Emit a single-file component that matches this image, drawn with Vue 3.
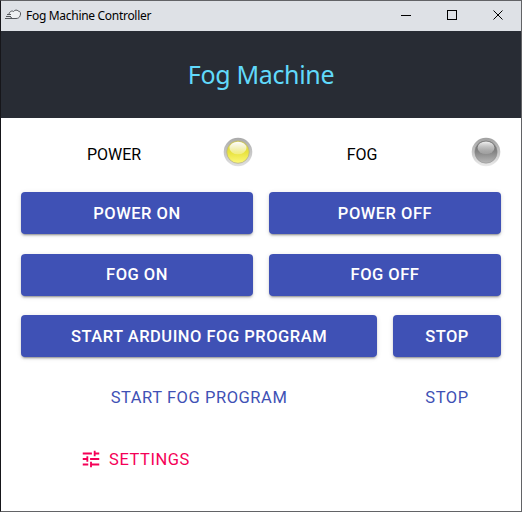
<script setup>
const rows = [
  { kind: 'halves', buttons: ['POWER ON', 'POWER OFF'] },
  { kind: 'halves', buttons: ['FOG ON', 'FOG OFF'] },
  { kind: 'wide', buttons: ['START ARDUINO FOG PROGRAM', 'STOP'] },
]
</script>

<template>
  <div class="window">
    <div class="titlebar">
      <svg class="logo" width="18" height="12" viewBox="0 0 18 12" fill="none" stroke="#55585c" stroke-width="1">
        <path fill="#eef0f2" d="M5 5C5.500 2.500 8 1.300 9.500 2.500C11 .7 13 .7 14.200 2C16.500 2.200 17 4.500 16.200 6.500C15.700 8.500 14 9.500 12 9.500H8.500L6 7.500" />
        <path d="M1 9.500H10M2 7.500H7M3 5.500H7" />
      </svg>
      <span class="caption">Fog Machine Controller</span>
      <svg class="controls" width="104" height="12" viewBox="0 0 104 12" fill="none" stroke="#000" stroke-width="1">
        <path d="M0 6.500H10" />
        <rect x="46.500" y="1.500" width="9" height="9" />
        <path d="M92.500 1.500L101.500 10.500M101.500 1.500L92.500 10.500" />
      </svg>
    </div>
    <header class="header"><h1>Fog Machine</h1></header>
    <main>
      <div class="status">
        <span class="label power">POWER</span>
        <svg class="led" width="30" height="30" viewBox="0 0 30 30">
          <defs>
            <linearGradient id="rim" x2="0" y2="1"><stop stop-color="#aaa" /><stop offset="1" stop-color="#e0e0e0" /></linearGradient>
            <linearGradient id="yellow" x2="0" y2="1"><stop stop-color="#d3cd50" /><stop offset=".5" stop-color="#e8e23c" /><stop offset="1" stop-color="#fcf879" /></linearGradient>
            <linearGradient id="shine" x2="0" y2="1"><stop stop-color="#fff" /><stop offset="1" stop-color="#fff" stop-opacity=".3" /></linearGradient>
          </defs>
          <circle cx="15" cy="15" r="14.300" fill="url(#rim)" />
          <circle cx="15" cy="15" r="11.300" fill="url(#yellow)" stroke="#b5b190" stroke-width=".8" />
          <ellipse cx="15" cy="11" rx="8.500" ry="6.300" fill="url(#shine)" />
        </svg>
        <span class="label fog">FOG</span>
        <svg class="led" width="30" height="30" viewBox="0 0 30 30">
          <defs>
            <linearGradient id="gray-rim" x2="0" y2="1"><stop stop-color="#a0a0a0" /><stop offset="1" stop-color="#ebebeb" /></linearGradient>
            <linearGradient id="gray" x2="0" y2="1"><stop stop-color="#666" /><stop offset=".5" stop-color="#858585" /><stop offset="1" stop-color="#b8b8b8" /></linearGradient>
            <linearGradient id="gray-shine" x2="0" y2="1"><stop stop-color="#f2f2f2" /><stop offset="1" stop-color="#bbb" stop-opacity=".4" /></linearGradient>
          </defs>
          <circle cx="15" cy="15" r="14.300" fill="url(#gray-rim)" />
          <circle cx="15" cy="15" r="11.200" fill="url(#gray)" stroke="#8c8c8c" stroke-width=".5" />
          <ellipse cx="15" cy="10.800" rx="8.500" ry="6.300" fill="url(#gray-shine)" />
        </svg>
      </div>
      <div v-for="row in rows" :key="row.buttons[0]" class="row" :class="row.kind">
        <button v-for="label in row.buttons" :key="label" class="contained">{{ label }}</button>
      </div>
      <div class="row wide">
        <button>START FOG PROGRAM</button>
        <button>STOP</button>
      </div>
      <div class="row halves">
        <button class="settings">
          <svg width="22" height="22" viewBox="0 0 24 24" fill="currentColor">
            <path d="M3 17v2h6v-2H3zM3 5v2h10V5H3zm10 16v-2h8v-2h-8v-2h-2v6h2zM7 9v2H3v2h4v2h2V9H7zm14 4v-2H11v2h10zm-6-4h2V7h4V5h-4V3h-2v6z" />
          </svg>
          <span>SETTINGS</span>
        </button>
      </div>
    </main>
  </div>
</template>

<style>
body { overflow: hidden; background: #fff; }
</style>

<style scoped>
.window {
  box-sizing: border-box;
  width: 522px;
  height: 512px;
  border: 1px solid #626366;
  border-left-color: #16161a;
  background: #fff;
  font-family: Roboto, sans-serif;
}
.titlebar {
  display: flex;
  align-items: center;
  height: 30px;
  box-sizing: border-box;
  padding: 0 16px 0 3px;
  background: #dee1e6;
}
.logo { margin-top: -2px; }
.caption {
  flex: 1;
  margin-left: 4px;
  font: 12px/16px "Noto Sans", sans-serif;
  letter-spacing: -.3px;
  color: #000;
}
.controls { margin-top: -2px; }
.header {
  display: flex;
  align-items: center;
  justify-content: center;
  height: 87px;
  padding-bottom: 2px;
  box-sizing: border-box;
  background: #282c34;
}
h1 {
  margin: 0;
  font: 400 25px/34px "Noto Sans", sans-serif;
  letter-spacing: -.35px;
  color: #61dafb;
}
main { padding: 0 20px; }
.status {
  display: flex;
  align-items: center;
  height: 74px;
  padding-bottom: 6px;
  box-sizing: border-box;
  font-size: 16px;
  line-height: 24px;
  color: #000;
}
.label { text-align: center; padding-top: 5px; }
.power { width: 186px; }
.fog { width: 218px; }
.led { width: 30px; height: 30px; }
.power + .led { margin-left: 16px; }
.row { display: grid; column-gap: 16px; margin-bottom: 19.600px; }
.halves { grid-template-columns: 232px 232px; }
.wide { grid-template-columns: 356px 108px; }
button {
  display: flex;
  align-items: center;
  justify-content: center;
  height: 42px;
  padding: 0;
  border: 0;
  border-radius: 4px;
  background: none;
  color: #3f51b5;
  font: 400 16.500px/26px Roboto, sans-serif;
  letter-spacing: .56px;
}
.contained {
  padding-top: 1px;
  background: #3f51b5;
  color: #fff;
  font-weight: 500;
  letter-spacing: .5px;
  box-shadow: 0 3px 1px -2px rgba(0, 0, 0, .2), 0 2px 2px 0 rgba(0, 0, 0, .14), 0 1px 5px 0 rgba(0, 0, 0, .12);
}
.settings { padding: 0 4px 0 0; color: #f50057; gap: 7px; }
.settings span { padding-top: 2px; }
</style>
